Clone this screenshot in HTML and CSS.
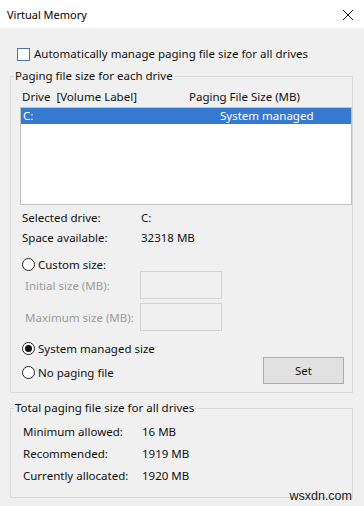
FILE: index.html
```html
<!DOCTYPE html>
<html>
<head>
<meta charset="utf-8">
<link rel="stylesheet" href="styles.css">
</head>
<body>
<div class="window">
  <div class="titlebar">
    <span class="title">Virtual Memory</span>
    <svg class="close" width="12" height="12" viewBox="0 0 12 12"><path d="M1 1 L11 11 M11 1 L1 11" stroke="#111" stroke-width="1" fill="none"/></svg>
  </div>
  <div class="content">
    <label class="check-row"><span class="checkbox"></span>Automatically manage paging file size for all drives</label>

    <fieldset class="group group-drive">
      <legend>Paging file size for each drive</legend>
      <div class="list-header"><span class="col-drive">Drive&nbsp;&nbsp;[Volume Label]</span><span class="col-size">Paging File Size (MB)</span></div>
      <div class="listbox">
        <div class="list-row selected"><span class="col-drive">C:</span><span class="col-size2">System managed</span></div>
      </div>
      <div class="info">
        <span>Selected drive:</span><span>C:</span>
        <span>Space available:</span><span>32318 MB</span>
      </div>
      <div class="radio-row custom"><span class="radio"></span>Custom size:</div>
      <div class="size-row"><span class="size-label">Initial size (MB):</span><span class="size-box"></span></div>
      <div class="size-row second"><span class="size-label">Maximum size (MB):</span><span class="size-box"></span></div>
      <div class="bottom">
        <div class="radios">
          <div class="radio-row"><span class="radio on"></span>System managed size</div>
          <div class="radio-row"><span class="radio"></span>No paging file</div>
        </div>
        <div class="button">Set</div>
      </div>
    </fieldset>

    <fieldset class="group group-total">
      <legend>Total paging file size for all drives</legend>
      <div class="totals">
        <span>Minimum allowed:</span><span>16 MB</span>
        <span>Recommended:</span><span>1919 MB</span>
        <span>Currently allocated:</span><span>1920 MB</span>
      </div>
    </fieldset>
  </div>
  <div class="watermark">wsxdn.com</div>
</div>
</body>
</html>
```
FILE: styles.css
```css
* { box-sizing: border-box; }
html, body { margin: 0; padding: 0; }
body {
  width: 364px;
  height: 506px;
  background: #f0f0f0;
  font-family: "Noto Sans", "Open Sans", sans-serif;
  font-size: 11.5px;
  color: #111;
  overflow: hidden;
}
.window { position: relative; width: 364px; height: 506px; }
.titlebar {
  height: 28px;
  background: #fff;
  display: flex;
  align-items: center;
  justify-content: space-between;
  padding: 0 10px 0 7px;
}
.title { font-size: 11px; color: #000; }
.close { display: block; margin-top: 1px; }
.content { display: flex; flex-direction: column; }
.check-row {
  display: flex;
  align-items: center;
  margin: 18px 0 0 17px;
  height: 16px;
  line-height: 16px;
}
.checkbox {
  width: 13px; height: 13px;
  border: 1px solid #4a74b0;
  background: #fff;
  margin-right: 4px;
  margin-top: 1px;
}
.group {
  margin: 6px 11px 0 10px;
  padding: 0 0 8px 0;
  border: 1px solid #dadada;
  min-width: 0;
}
.group legend {
  margin-left: 3px;
  padding: 0 1px;
  line-height: 16px;
  height: 16px;
}
.list-header {
  display: flex;
  margin: 5px 0 0 11px;
  line-height: 16px;
}
.list-header .col-drive { width: 167px; }
.listbox {
  margin: 2px 0 0 9px;
  height: 98px;
  border: 1px solid #c2c2c2;
  background: #fff;
}
.list-row {
  display: flex;
  height: 16px;
  line-height: 16px;
  padding-left: 2px;
}
.list-row.selected { background: #3679d1; color: #fff; }
.list-row .col-drive { width: 197px; }
.info {
  display: grid;
  grid-template-columns: 119px auto;
  margin: 3px 0 0 11px;
  line-height: 20px;
}
.radio-row {
  display: flex;
  align-items: center;
  height: 20px;
  margin-left: 11px;
}
.radio-row.custom { height: 14px; margin-top: 9px; }
.radio {
  width: 13px; height: 13px;
  border: 1px solid #222;
  border-radius: 50%;
  background: #fff;
  margin-right: 3px;
  display: flex;
  align-items: center;
  justify-content: center;
}
.radio.on::after {
  content: "";
  width: 7px; height: 7px;
  border-radius: 50%;
  background: #111;
}
.size-row {
  display: flex;
  align-items: center;
  margin-left: 14px;
  height: 28px;
}
.size-row.second { margin-top: 4px; }
.size-label { width: 115px; color: #9b9b9b; }
.size-box {
  width: 82px; height: 28px;
  border: 1px solid #d2d2d2;
  background: #f0f0f0;
}
.bottom {
  display: flex;
  justify-content: space-between;
  align-items: flex-start;
  margin-top: 7px;
}
.radios { display: flex; flex-direction: column; gap: 4px; }
.button {
  width: 81px; height: 27px;
  margin: 19px 8px 0 0;
  background: #e1e1e1;
  border: 1px solid #adadad;
  display: flex;
  align-items: center;
  justify-content: center;
}
.group-total { margin-top: 7px; padding-bottom: 10px; }
.totals {
  display: grid;
  grid-template-columns: 119px auto;
  margin: 5px 0 0 12px;
  line-height: 22px;
}
.watermark {
  position: absolute;
  right: 12px;
  bottom: 3px;
  font-family: "Liberation Sans", Arial, sans-serif;
  font-size: 12.5px;
  color: #1a1a1a;
}
```
